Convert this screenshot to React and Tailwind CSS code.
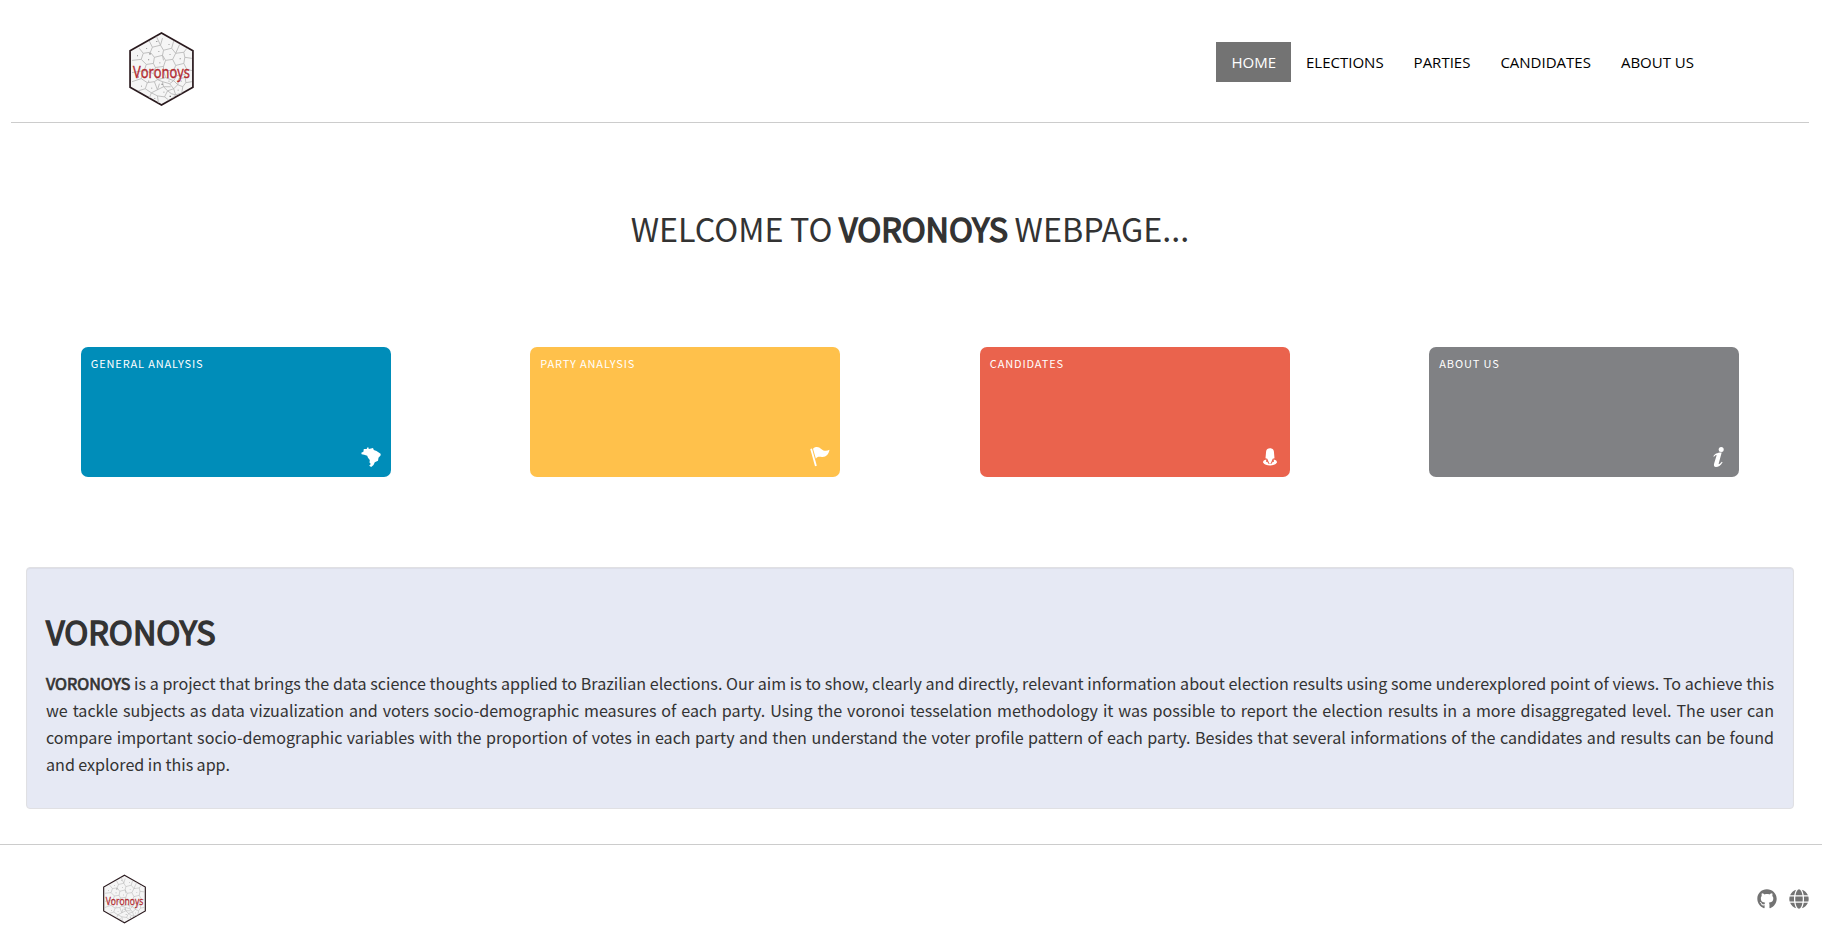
import { FaGithub, FaGlobe } from "react-icons/fa";

const sans = "font-['Noto_Sans_CJK_SC','Source_Sans_Pro',sans-serif]";

function Logo({ className }) {
  return (
    <svg viewBox="0 0 64 73" className={`overflow-visible ${className}`}>
      <path d="M32 1 63 18.6V54.4L32 72 1 54.4V18.6Z" fill="#f5f5f5" stroke="#2a1a1e" strokeWidth="1.7" />
      <g fill="none" stroke="#b4b4b4" strokeWidth="0.8">
        <path d="M20 9 23 15 31 13 33 6 M31 13 34 18 42 16 44 9 M23 15 21 20 14 21 10 16 M21 20 25 25 33 23 34 18 M42 16 46 21 43 27 36 28 33 23 M46 21 54 20 57 16 M14 21 12 27 3 28 M12 27 17 32 24 31 25 25 M43 27 46 33 54 31 55 25 54 20 M55 25 62 26 M36 28 34 34 26 35 24 31 M17 32 15 38 3 40 M46 33 44 38 34 38 34 34 M54 31 57 37 62 38 M26 35 24 41 15 38 M24 41 28 47 36 45 34 38 M44 38 47 43 44 48 36 45 M47 43 55 42 57 37 M15 38 12 46 3 49 M12 46 18 50 25 49 28 47 M18 50 16 56 9 58 M16 56 22 60 28 57 25 49 M28 57 34 54 33 49 28 47 M33 49 40 51 44 48 M34 54 38 58 35 64 28 63 22 60 20 65 M38 58 44 56 40 51 M44 56 48 52 44 48 M48 52 53 54 56 50 55 42 M53 54 52 60 M44 56 46 62 52 60 M56 50 62 49 M28 63 29 70 M35 64 39 67 M46 62 43 65" />
        <path d="M34 54 41 54 M48 52 49 46 55 45 M38 58 42 61 46 62 M30 51 28 57 M27 4.500 31 13 M33 23 34 28 M50 12 46 21" />
      </g>
      <g fill="#666">
        <path d="M27 9h.8v.8H27zM39 12h.8v.8H39zM17 16h.8v.8H17zM20 21h1.300v1.200H20zM29 19h.8v.8H29zM40 22h.8v.8H40zM50 26h.8v.8H50zM8 23h.8v.8H8zM19 27h.8v.8H19zM30 30h.8v.8H30zM9 44h.8v.8H9zM19 48h.8v.8H19zM32 51h1.200v1H32zM39 48h.8v.8H39zM51 48h.8v.8H51zM12 53h.8v.8H12zM22 55h.8v.8H22zM34 59h.8v.8H34zM40 63h1.200v1H40zM48 57h.8v.8H48zM25 65h.8v.8H25z" />
      </g>
      <text x="32" y="45" textAnchor="middle" textLength="56" lengthAdjust="spacingAndGlyphs" fontFamily="Open Sans, sans-serif" fontSize="16.500" fill="#b3282d" stroke="#b3282d" strokeWidth="0.400">
        Voronoys
      </text>
    </svg>
  );
}

const Brazil = () => (
  <svg viewBox="0 0 20 20" className="size-5" fill="#fff">
    <path d="M6 .7 7.3.2 7.8 2 10 1.4 12 1 12.8 3 15.5 4 19.6 6.8 19.7 8.2 17.5 10.8 17 13.7 13.8 15.2 12.5 18 10.2 20 8.2 18.8 9.8 17 8.500 15.500 8.800 13 7 10.800 6.200 8.700 3.200 7.800.6 7.200.3 5.800 2.400 4.800 2.800 2 5.800 2Z" />
  </svg>
);
const Flag = () => (
  <svg viewBox="0 0 20 20" className="size-5" fill="#fff">
    <path d="M.3 1.900 2 1.400 6.800 18.800 5 19.300Z" />
    <path d="M3 1.700C6.500-1.100 9.200.3 11.200 1.900 13.600 3.900 16.200 4.500 19.500 2.800 18.700 7.500 16 10.200 12 9.900 9.200 9.500 7.100 9.200 5.900 11.700Z" />
  </svg>
);
const Person = () => (
  <svg viewBox="0 0 20 20" className="size-5" fill="#fff">
    <path d="M5.500 11.200 6.100 4.500C6.300 2.200 8 1.200 10 1.200s3.700 1 3.900 3.300L14.500 11.200 12.700 11.800 10.600 16.800H9.400L7.300 11.800Z" />
    <path d="M6.300 12.600C4 13 3 14 3 15.600 4.600 17.800 7 18.500 10 18.500S15.400 17.800 17 15.600C17 14 16 13 13.700 12.600L13.900 15 12.800 14.700 11.200 17H8.800L7.200 14.700 6.100 15Z" />
  </svg>
);
const Info = () => (
  <svg viewBox="0 0 20 20" className="size-5" fill="#fff">
    <circle cx="12.200" cy="2.500" r="2.500" />
    <path d="M4.300 9.300C5.800 6.900 7.800 5.700 12.700 5.500L9.700 16.500C9.500 17.600 10.300 17.500 12.900 14.700L13.600 15.200C11.600 18.600 9.300 20 7 20 4.800 20 4.600 18.300 5.200 16.300L7.500 8.700C7.700 7.700 6.800 7.600 5 9.800Z" />
  </svg>
);

const cards = [
  { label: "GENERAL ANALYSIS", color: "bg-[#008db9]", Icon: Brazil },
  { label: "PARTY ANALYSIS", color: "bg-[#ffc14b]", Icon: Flag },
  { label: "CANDIDATES", color: "bg-[#ea634d]", Icon: Person },
  { label: "ABOUT US", color: "bg-[#808184]", Icon: Info },
];

const Strong = ({ children }) => (
  <span className="[-webkit-text-stroke:0.045em_currentColor]">{children}</span>
);

export default function App() {
  return (
    <div className={`h-[937px] overflow-hidden bg-white text-[#333] ${sans}`}>
      <header className="mr-[13px] ml-[11px] flex h-[123px] items-start justify-between border-b border-[#ccc] pr-[100px] pl-[118px]">
        <Logo className="mt-8 h-[74px] w-[65px]" />
        <nav className="mt-[42px] flex font-['Open_Sans',sans-serif] text-[15px] leading-10 text-black">
          {["HOME", "ELECTIONS", "PARTIES", "CANDIDATES", "ABOUT US"].map((item, i) => (
            <a key={item} className={i === 0 ? "bg-[#737373] px-[15px] text-white" : "px-[15px]"}>
              {item}
            </a>
          ))}
        </nav>
      </header>

      <h1 className="mt-[81px] mr-0.5 text-center text-[32.3px] leading-[48px] [word-spacing:-0.7px]">
        WELCOME TO <Strong>VORONOYS</Strong> WEBPAGE...
      </h1>

      <section className="mt-[95px] mr-[13px] ml-[11px] grid grid-cols-4">
        {cards.map(({ label, color, Icon }) => (
          <a key={label} className={`mx-auto flex h-[130px] w-[310px] flex-col justify-between rounded-[7px] px-[10px] pt-[9px] pb-[10px] text-white ${color}`}>
            <span className="text-[11px] leading-[15px] tracking-[0.86px]">{label}</span>
            <span className="self-end">
              <Icon />
            </span>
          </a>
        ))}
      </section>

      <section className="mt-[90px] mr-7 ml-[26px] h-[242px] rounded-[4px] border border-[#e0e0e3] bg-[#e6e9f4] px-[19px] pt-[39px] shadow-[inset_0_1px_1px_rgba(0,0,0,0.05)]">
        <h2 className="text-[32.4px] leading-[48px]">
          <Strong>VORONOYS</Strong>
        </h2>
        <p className="mt-[15px] text-justify text-[16.1px] leading-[27px] [word-spacing:-0.2px]">
          <Strong>VORONOYS</Strong> is a project that brings the data science thoughts applied to Brazilian elections.
          Our aim is to show, clearly and directly, relevant information about election results using some
          underexplored point of views. To achieve this we tackle subjects as data vizualization and voters
          socio-demographic measures of each party. Using the voronoi tesselation methodology it was possible to
          report the election results in a more disaggregated level. The user can compare important
          socio-demographic variables with the proportion of votes in each party and then understand the voter
          profile pattern of each party. Besides that several informations of the candidates and results can be
          found and&nbsp;explored in this app.
        </p>
      </section>

      <footer className="mt-[35px] flex items-center justify-between border-t border-[#ccc] pt-[29px] pr-[13px] pl-[103px]">
        <Logo className="h-[50px] w-[43px]" />
        <div className="flex gap-3 text-[20px] text-[#737373]">
          <FaGithub />
          <FaGlobe />
        </div>
      </footer>
    </div>
  );
}
